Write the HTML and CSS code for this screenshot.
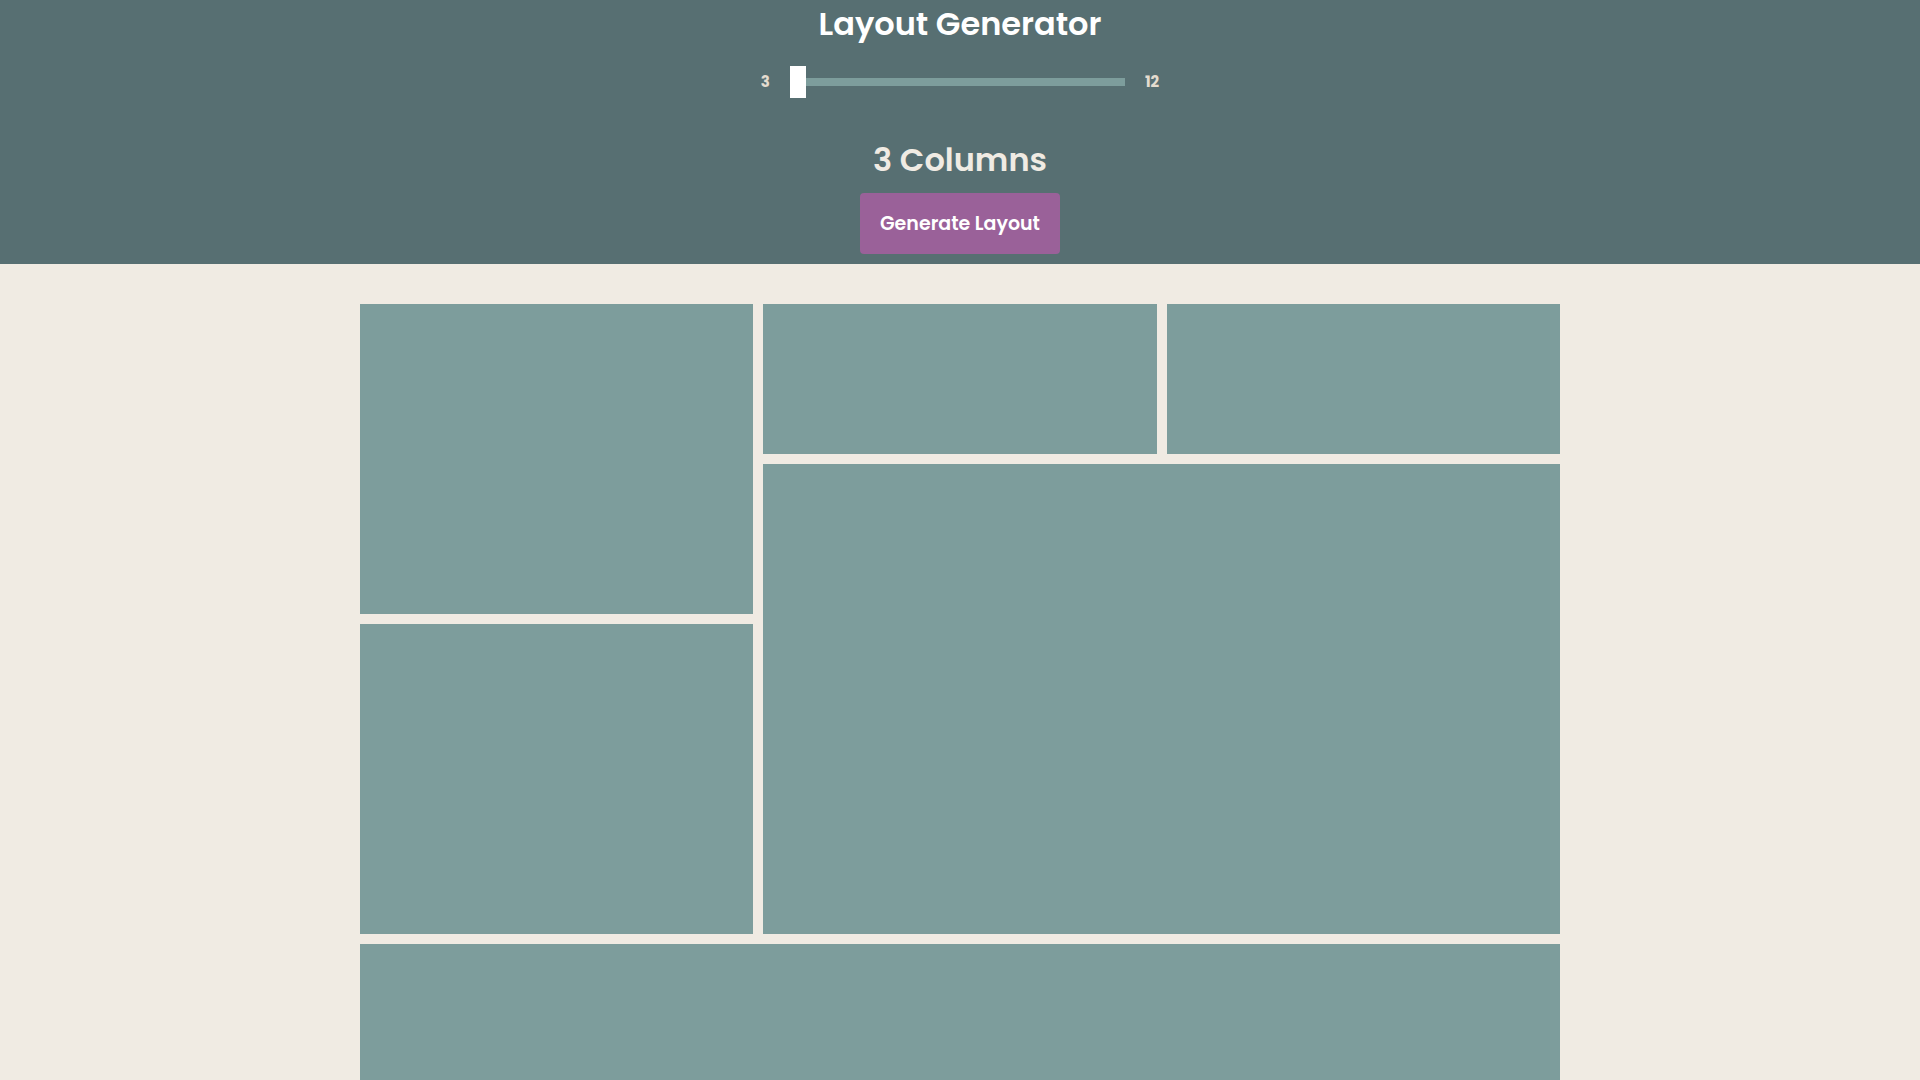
FILE: index.html
```html
<!DOCTYPE html>
<html lang="en">
<head>
<meta charset="utf-8">
<title>Layout Generator</title>
<link rel="stylesheet" href="styles.css">
</head>
<body>
<header class="header">
  <h1 class="title">Layout Generator</h1>
  <div class="slider-row">
    <span class="slider-label">3</span>
    <input class="slider" type="range" min="3" max="12" value="3">
    <span class="slider-label">12</span>
  </div>
  <h2 class="columns">3 Columns</h2>
  <button class="btn">Generate Layout</button>
</header>
<main class="grid">
  <div class="cell rows-2"></div>
  <div class="cell"></div>
  <div class="cell"></div>
  <div class="cell cols-2 rows-3"></div>
  <div class="cell rows-2"></div>
  <div class="cell cols-3 rows-3"></div>
  <div class="cell"></div>
  <div class="cell cols-2"></div>
</main>
</body>
</html>
```
FILE: styles.css
```css
* { box-sizing: border-box; }
html, body { margin: 0; padding: 0; }
body {
  background: #f0ebe3;
  font-family: "Poppins", "Inter", "Lato", sans-serif;
}
.header {
  background: #576f72;
  display: flex;
  flex-direction: column;
  align-items: center;
  padding: 4px 0 10px;
}
.title {
  margin: 0;
  font-size: 32px;
  font-weight: 600;
  color: #ffffff;
  line-height: 40px;
}
.slider-row {
  display: flex;
  align-items: center;
  gap: 20px;
  margin-top: 18px;
  height: 40px;
}
.slider-label {
  color: #e4dccf;
  font-size: 15px;
  font-weight: 700;
  margin-top: -2px;
}
.slider {
  -webkit-appearance: none;
  appearance: none;
  width: 335px;
  height: 8px;
  margin: 0;
  background: #7d9d9c;
  outline: none;
}
.slider::-webkit-slider-thumb {
  -webkit-appearance: none;
  appearance: none;
  width: 16px;
  height: 32px;
  background: #ffffff;
  border: none;
  cursor: pointer;
}
.columns {
  margin: 38px 0 0;
  font-size: 32px;
  font-weight: 600;
  color: #f0ebe3;
  line-height: 40px;
}
.btn {
  margin-top: 13px;
  width: 200px;
  height: 61px;
  border: none;
  border-radius: 4px;
  background: #9a6199;
  color: #ffffff;
  font-family: inherit;
  font-size: 19px;
  font-weight: 600;
}
.grid {
  width: 1200px;
  margin: 40px auto;
  display: grid;
  grid-template-columns: repeat(3, 1fr);
  grid-auto-rows: 150px;
  gap: 10px;
}
.cell { background: #7d9d9c; }
.rows-2 { grid-row: span 2; }
.rows-3 { grid-row: span 3; }
.cols-2 { grid-column: span 2; }
.cols-3 { grid-column: span 3; }
```
